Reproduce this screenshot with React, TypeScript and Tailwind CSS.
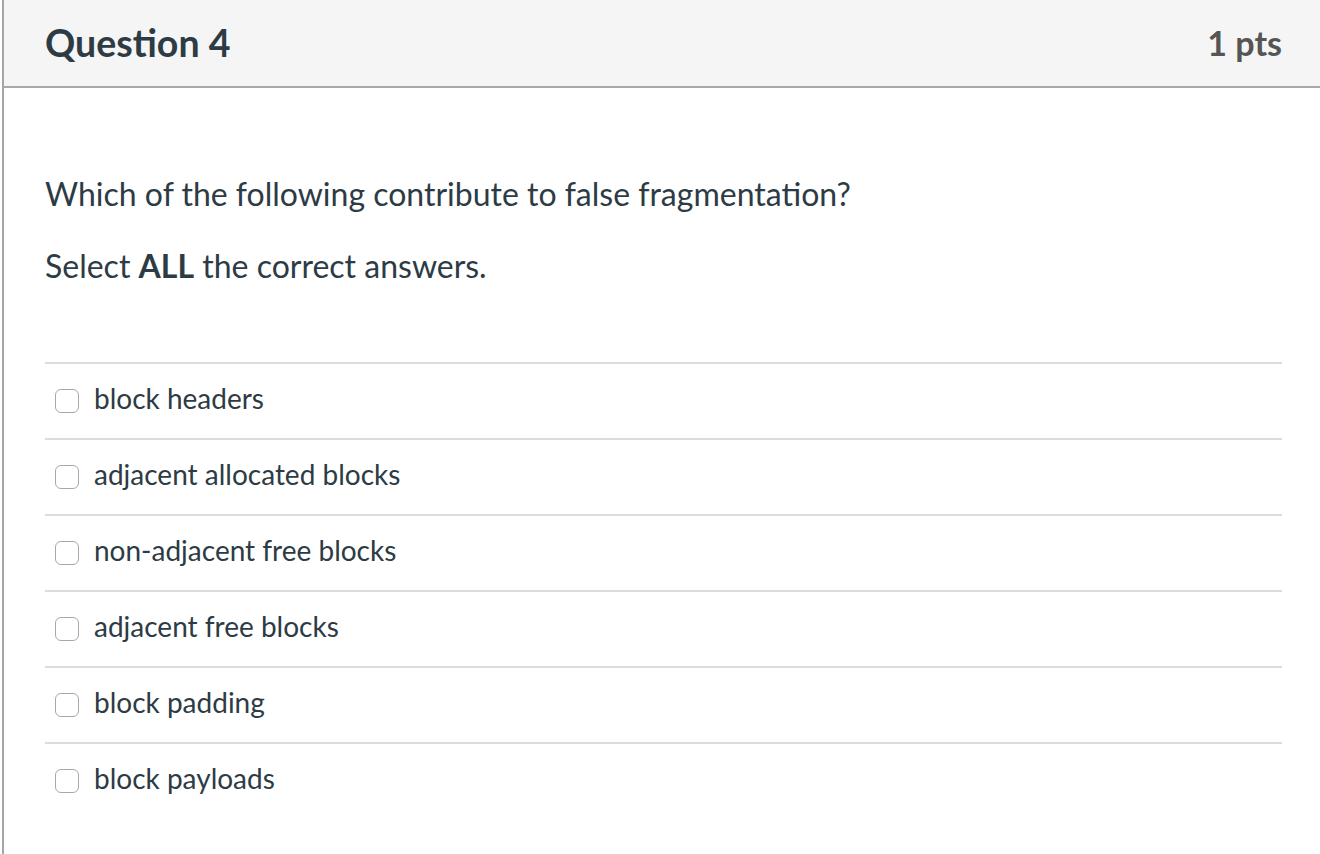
const answers = [
  "block headers",
  "adjacent allocated blocks",
  "non-adjacent free blocks",
  "adjacent free blocks",
  "block padding",
  "block payloads",
];

function Checkbox() {
  return (
    <span className="block h-[24px] w-[24px] shrink-0 rounded-[6px] border-[1.5px] border-[#a8a8a8] bg-white" />
  );
}

export default function App() {
  return (
    <div
      className="min-h-[854px] w-full bg-white pl-[2px] text-[#2d3b45]"
      style={{ fontFamily: "Lato, 'Noto Sans', sans-serif" }}
    >
      <div className="min-h-[854px] border-l-2 border-[#a5a5a5]">
        <div className="flex h-[88px] items-center justify-between border-b-2 border-[#a8a8a8] bg-[#f5f5f5] pl-[41px] pr-[38px]">
          <h2 className="text-[37.5px] font-bold leading-none">Question 4</h2>
          <span className="text-[34px] font-bold leading-none text-[#555]">1 pts</span>
        </div>
        <div className="pl-[41px] pr-[38px] pt-[86px]">
          <p className="text-[32px] leading-[40px]">
            Which of the following contribute to false fragmentation?
          </p>
          <p className="mt-[32px] text-[32px] leading-[40px]">
            Select <strong className="font-bold">ALL</strong> the correct answers.
          </p>
          <div className="mt-[76px]">
            {answers.map((a) => (
              <label
                key={a}
                className="flex h-[76px] items-center gap-[15px] border-t-2 border-[#dcdcdc] pl-[10px]"
              >
                <Checkbox />
                <span className="mb-[6px] text-[28px] leading-none">{a}</span>
              </label>
            ))}
          </div>
        </div>
      </div>
    </div>
  );
}
